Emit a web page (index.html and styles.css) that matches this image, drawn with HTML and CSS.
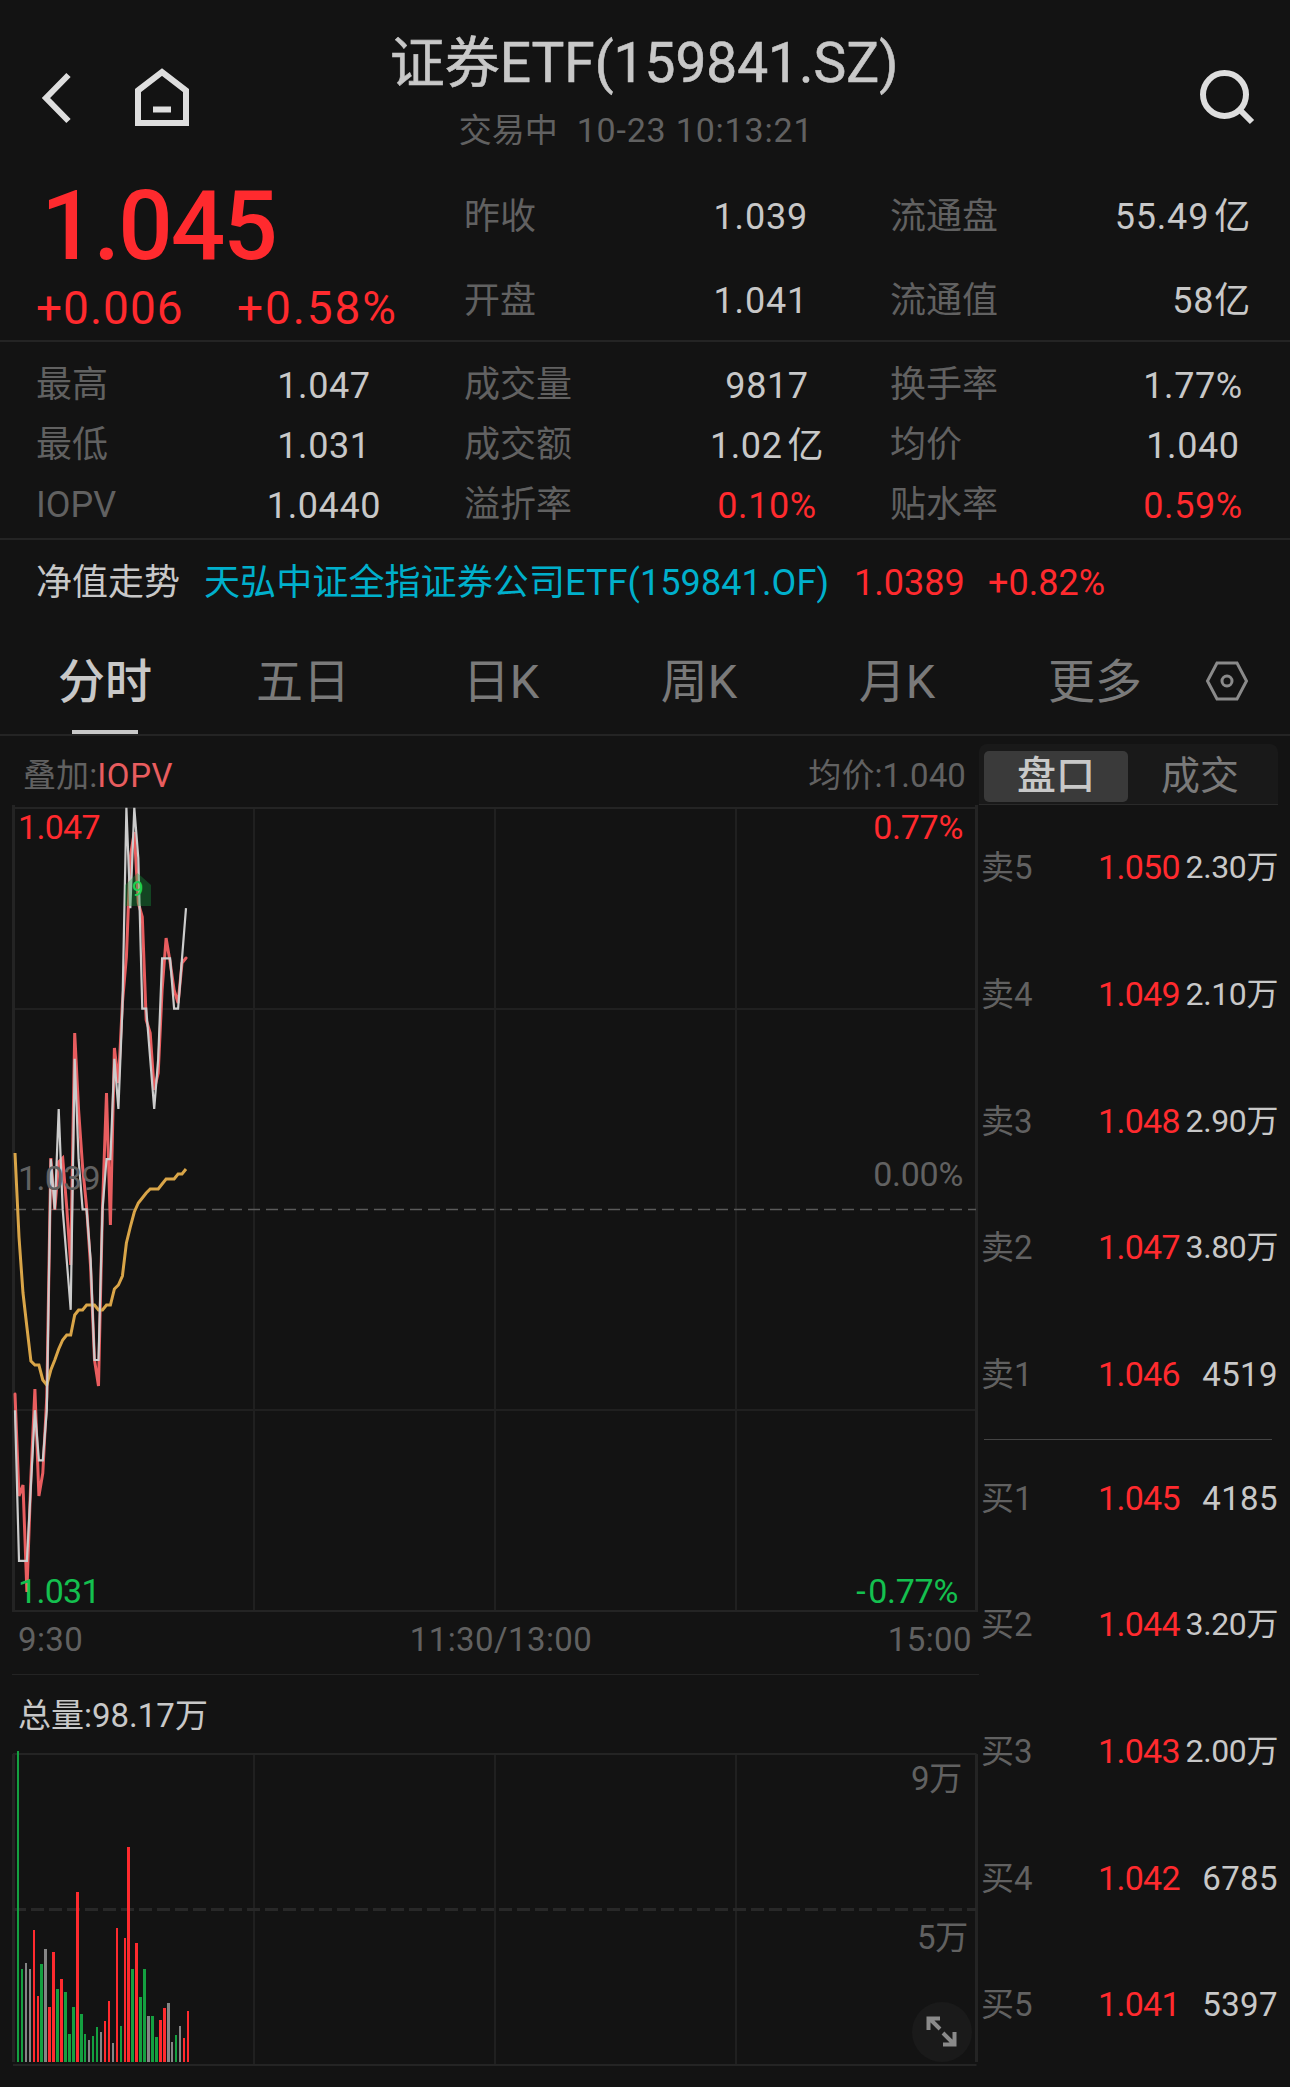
FILE: index.html
```html
<!DOCTYPE html>
<html lang="zh-CN">
<head>
  <meta charset="utf-8">
  <title>证券ETF(159841.SZ)</title>
  <link rel="stylesheet" href="styles.css">
</head>
<body>
  <!-- 顶部标题栏 -->
  <header class="header">
    <div class="header-left">
      <svg class="icon-back" width="32" height="52" viewBox="0 0 32 52"><path d="M29.500 3L7 26l22.500 23"/></svg>
      <svg class="icon-home" width="56" height="60" viewBox="0 0 56 60"><path d="M4 23.500L28 5l24 18.500V56H4z"/><path d="M19 42.500h18"/></svg>
    </div>
    <div class="header-title">
      <h1>证券ETF(159841.SZ)</h1>
      <p><span>交易中</span><span class="time">10-23 10:13:21</span></p>
    </div>
    <div class="header-right">
      <svg class="icon-search" width="58" height="58" viewBox="0 0 58 58"><circle cx="27.500" cy="27.500" r="21.500"/><path d="M43 43l12 12"/></svg>
    </div>
  </header>

  <!-- 最新价 -->
  <section class="quote">
    <div class="quote-price">
      <div class="price">1.045</div>
      <div class="change"><span>+0.006</span><span class="percent">+0.58%</span></div>
    </div>
    <dl class="quote-info">
      <dt>昨收</dt><dd>1.039</dd>
      <dt>流通盘</dt><dd>55.49<span class="unit">亿</span></dd>
      <dt>开盘</dt><dd>1.041</dd>
      <dt>流通值</dt><dd>58亿</dd>
    </dl>
  </section>

  <!-- 指标 -->
  <dl class="stats">
    <dt>最高</dt><dd>1.047</dd>
    <dt>成交量</dt><dd>9817</dd>
    <dt>换手率</dt><dd>1.77%</dd>
    <dt>最低</dt><dd>1.031</dd>
    <dt>成交额</dt><dd>1.02<span class="unit">亿</span></dd>
    <dt>均价</dt><dd>1.040</dd>
    <dt>IOPV</dt><dd>1.0440</dd>
    <dt>溢折率</dt><dd class="up">0.10%</dd>
    <dt>贴水率</dt><dd class="up">0.59%</dd>
  </dl>

  <!-- 净值走势 -->
  <div class="nav-trend">
    <span>净值走势</span>
    <a class="fund">天弘中证全指证券公司ETF(159841.OF)</a>
    <span class="up nav-value">1.0389</span>
    <span class="up">+0.82%</span>
  </div>

  <nav class="tabs">
    <a class="tab active">分时</a>
    <a class="tab">五日</a>
    <a class="tab">日K</a>
    <a class="tab">周K</a>
    <a class="tab">月K</a>
    <a class="tab">更多</a>
    <svg class="icon-setting" width="46" height="42" viewBox="0 0 46 42"><path d="M13 3h20l9.500 18L33 39H13L3.500 21z"/><circle cx="23" cy="21" r="5"/></svg>
  </nav>

  <main class="main">
    <div class="charts">
      <div class="legend">
        <span>叠加:<span class="iopv">IOPV</span></span>
        <span>均价:1.040</span>
      </div>

      <!-- 分时图 -->
      <svg class="chart" width="979" height="817" viewBox="0 799 979 817">
        <path class="grid" d="M14 1009H976M14 1410H976M254 808V1611M495 808V1611M736 808V1611"/>
        <path class="frame" d="M13 808H976.500M13 1611H976.500"/>
        <path class="side" d="M13.500 805V1612M976.500 805V1612"/>
        <path class="zero" d="M14 1209.500H976"/>
        <polyline id="iopv" class="line-iopv"/>
        <polyline id="avg" class="line-avg"/>
        <polyline id="price" class="line-price"/>
        <path class="flag" d="M125 906V885l12.500-12L151 885v21z"/>
        <text class="flag-text" x="132" y="896">9</text>
        <text class="grey start" x="18" y="1190">1.039</text>
        <text class="red start" x="18" y="839">1.047</text>
        <text class="green start" x="18" y="1603">1.031</text>
        <text class="red end" x="963" y="839">0.77%</text>
        <text class="grey end" x="963" y="1186">0.00%</text>
        <text class="green end" x="963" y="1603"><tspan dx="-5">-</tspan><tspan dx="3">0.77%</tspan></text>
      </svg>
      <div class="axis"><span>9:30</span><span>11:30/13:00</span><span>15:00</span></div>

      <!-- 成交量 -->
      <div class="total">总量:98.17万</div>
      <svg class="chart" width="979" height="325" viewBox="0 1745 979 325">
        <path class="grid" d="M254 1754V2064M495 1754V2064M736 1754V2064"/>
        <path class="frame" d="M13 1754H976.500M13 2065H976.500"/>
        <path class="side" d="M13.500 1754V2062M976.500 1754V2062"/>
        <path class="half" d="M13 1909.500H976"/>
        <g id="volume"></g>
        <text class="grey end unit-text" x="962" y="1790">9万</text>
        <text class="grey end unit-text" x="968" y="1949">5万</text>
        <circle class="expand-bg" cx="942" cy="2032" r="30"/>
        <path class="expand" d="M940 2029L929 2018M928.500 2030V2018.500H940M943 2033L954 2044M954.500 2032V2044.500H943"/>
      </svg>
    </div>

    <!-- 五档盘口 -->
    <aside class="book">
      <div class="switch"><span class="on">盘口</span><span>成交</span></div>
      <ul class="sell">
        <li><span>卖5</span><b>1.050</b><i class="wan">2.30万</i></li>
        <li><span>卖4</span><b>1.049</b><i class="wan">2.10万</i></li>
        <li><span>卖3</span><b>1.048</b><i class="wan">2.90万</i></li>
        <li><span>卖2</span><b>1.047</b><i class="wan">3.80万</i></li>
        <li><span>卖1</span><b>1.046</b><i>4519</i></li>
      </ul>
      <ul class="buy">
        <li><span>买1</span><b>1.045</b><i>4185</i></li>
        <li><span>买2</span><b>1.044</b><i class="wan">3.20万</i></li>
        <li><span>买3</span><b>1.043</b><i class="wan">2.00万</i></li>
        <li><span>买4</span><b>1.042</b><i>6785</i></li>
        <li><span>买5</span><b>1.041</b><i>5397</i></li>
      </ul>
    </aside>
  </main>

  <script src="chart.js"></script>
</body>
</html>
```

FILE: styles.css
```css
* {
  box-sizing: border-box;
}

body {
  margin: 0;
  width: 1290px;
  height: 2087px;
  overflow: hidden;
  background-color: #131313;
  color: #c8c8c8;
  font-family: Roboto, "Noto Sans CJK SC", sans-serif;
  font-size: 36px;
}

h1, p, dl, dd, ul {
  margin: 0;
  padding: 0;
}

svg {
  display: block;
  fill: none;
}

.up {
  color: #ff2a2e;
}

/* 标题栏 */
.header {
  display: grid;
  grid-template-columns: 240px 1fr 242px;
  height: 170px;
}

.header-left {
  display: flex;
  align-items: flex-start;
  padding: 67px 0 0 39px;
  gap: 63px;
}

.header-right {
  padding: 67px 0 0 149px;
}

.icon-back, .icon-home, .icon-search {
  stroke: #dedede;
  stroke-width: 6;
}

.icon-back {
  margin-top: 5px;
}

.header-title {
  padding-top: 33px;
  text-align: center;
}

.header-title h1 {
  font-size: 55px;
  font-weight: 400;
  line-height: 60px;
  -webkit-text-stroke: 0.6px #c8c8c8;
}

.header-title p {
  margin: 14px 16px 0 0;
  font-size: 33px;
  line-height: 46px;
  color: #616161;
}

.time {
  margin-left: 19px;
  font-size: 34px;
  letter-spacing: 0.8px;
}

/* 最新价 */
.quote {
  display: grid;
  grid-template-columns: 464px 1fr;
  height: 172px;
  border-bottom: 2px solid #242424;
}

.quote-price {
  color: #ff2a2e;
}

.price {
  padding-left: 41px;
  font-size: 96px;
  font-weight: 500;
  line-height: 112px;
  letter-spacing: -2px;
}

.change {
  display: flex;
  padding-left: 36px;
  font-size: 46px;
  line-height: 52px;
  letter-spacing: 1px;
}

.change span {
  width: 201px;
}

.change .percent {
  letter-spacing: 1.9px;
}

.quote-info {
  display: grid;
  grid-template-columns: 170px 174px 253px 190px;
  grid-auto-rows: 84px;
  padding-top: 5px;
  line-height: 84px;
}

.quote-info dt, .stats dt {
  color: #616161;
}

.quote-info dt:nth-of-type(even) {
  padding-left: 82px;
}

.quote-info dd {
  text-align: right;
  white-space: nowrap;
  letter-spacing: 0.8px;
}

.unit {
  margin-left: 5px;
}

/* 指标 */
.stats {
  display: grid;
  grid-template-columns: 175px 226px 217px 226px 216px 194px;
  height: 198px;
  padding: 13px 0 0 36px;
  grid-auto-rows: 60px;
  line-height: 60px;
  border-bottom: 2px solid #242424;
}

.stats dt:nth-of-type(3n + 2) {
  padding-left: 27px;
}

.stats dt:nth-of-type(3n) {
  padding-left: 10px;
}

.stats dd {
  padding-top: 1px;
  text-align: center;
  letter-spacing: 0.6px;
}

/* 净值走势 */
.nav-trend {
  display: flex;
  height: 85px;
  padding-left: 36px;
  line-height: 86px;
  white-space: nowrap;
}

.fund {
  width: 650px;
  margin-left: 24px;
  color: #00b0cc;
  letter-spacing: 0.1px;
}

.nav-value {
  width: 134px;
}

/* 周期切换 */
.tabs {
  display: flex;
  height: 111px;
  padding-left: 6px;
  border-bottom: 2px solid #242424;
  font-size: 47px;
  line-height: 114px;
  color: #7a7a7a;
}

.tab {
  position: relative;
  width: 198px;
  text-align: center;
}

.tab.active {
  color: #c8c8c8;
  font-weight: 500;
}

.tab.active::after {
  content: "";
  position: absolute;
  left: 66px;
  bottom: 0;
  width: 66px;
  height: 4px;
  background-color: #c8c8c8;
}

.icon-setting {
  margin: 35px 0 0 10px;
  stroke: #8a8a8a;
  stroke-width: 3;
}

/* 图表 */
.main {
  display: grid;
  grid-template-columns: 979px 311px;
}

.legend {
  display: flex;
  justify-content: space-between;
  height: 63px;
  padding: 0 13px 0 23px;
  font-size: 33px;
  line-height: 80px;
  letter-spacing: 0.1px;
  color: #616161;
}

.iopv {
  color: #e85d5f;
  letter-spacing: 0.6px;
}

.chart text {
  font-size: 34px;
}

.chart .start {
  letter-spacing: -0.7px;
}

.chart .end {
  text-anchor: end;
  letter-spacing: -0.3px;
}

.chart .unit-text {
  font-size: 33px;
}

.grey {
  fill: #616161;
}

.red {
  fill: #ff2a2e;
}

.green {
  fill: #14c04f;
}

.grid {
  stroke: #202020;
  stroke-width: 2;
}

.frame {
  stroke: #242424;
  stroke-width: 2;
}

.side {
  stroke: #242424;
  stroke-width: 3;
}

.zero {
  stroke: #5a5a5a;
  stroke-width: 1.5;
  stroke-dasharray: 12 6;
}

.half {
  stroke: #282828;
  stroke-width: 3;
  stroke-dasharray: 13 5;
}

.line-iopv {
  stroke: #e85d5f;
  stroke-width: 3;
  stroke-linecap: round;
}

.line-avg {
  stroke: #d9a548;
  stroke-width: 3;
}

.line-price {
  stroke: #cccccc;
  stroke-width: 2.2;
}

.flag {
  fill: #14a040;
  opacity: 0.35;
}

.chart .flag-text {
  fill: #20d050;
  font-size: 20px;
  font-weight: 500;
}

.axis {
  display: grid;
  grid-template-columns: 1fr auto 1fr;
  height: 58px;
  padding: 0 7px 0 18px;
  font-size: 33px;
  line-height: 47px;
  color: #616161;
  letter-spacing: 0.4px;
}

.axis span:nth-child(2) {
  padding-left: 12px;
}

.axis span:last-child {
  text-align: right;
}

.total {
  height: 71px;
  margin-left: 12px;
  padding-left: 6px;
  border-top: 1px solid #242424;
  font-size: 33px;
  line-height: 82px;
}

.expand-bg {
  fill: #1a1a1a;
}

.expand {
  stroke: #8a8a8a;
  stroke-width: 4;
}

/* 盘口 */
.switch {
  display: flex;
  width: 299px;
  height: 61px;
  margin-top: 8px;
  padding: 7px 5px;
  background-color: #191919;
  border-bottom: 1px solid #2a2a2a;
  border-radius: 8px 8px 0 0;
  font-size: 39px;
  line-height: 50px;
  text-align: center;
  color: #7a7a7a;
}

.switch span {
  width: 144px;
  height: 51px;
}

.switch .on {
  background-color: #3a3a3a;
  border-radius: 5px;
  color: #c8c8c8;
  font-weight: 500;
}

.sell, .buy {
  list-style: none;
  font-size: 33px;
}

.sell {
  height: 633px;
}

.buy {
  position: relative;
}

.buy::before {
  content: "";
  position: absolute;
  left: 5px;
  top: 1px;
  width: 288px;
  height: 1px;
  background-color: #444444;
}

.book li {
  display: grid;
  grid-template-columns: 113px 88px 1fr;
  height: 126.800px;
  padding: 0 12px 0 2px;
  line-height: 125px;
}

.book .buy li:first-child {
  height: 124px;
  line-height: 121px;
}

.book li span {
  color: #616161;
}

.book li b {
  padding-left: 4px;
  font-size: 34px;
  font-weight: 400;
  letter-spacing: -0.7px;
  color: #ff2a2e;
}

.book li i {
  justify-self: end;
  font-size: 33px;
  font-style: normal;
  letter-spacing: 0.4px;
  white-space: nowrap;
}

.book li .wan {
  font-size: 32px;
  letter-spacing: -0.4px;
}
```

FILE: chart.js
```js
// 每分钟一个点,9:30 起
var prices = [1035, 1032, 1032, 1032, 1033.5, 1035, 1034, 1034, 1035, 1040, 1039, 1041, 1039, 1038, 1037,
  1042, 1040, 1039, 1039, 1038, 1036, 1036, 1039, 1040, 1040, 1042, 1041, 1043, 1047, 1045, 1047, 1046,
  1043, 1043, 1042, 1041, 1042, 1044, 1044, 1044, 1043, 1043, 1044, 1045];

// 曲线坐标 y
var iopv = [1394, 1496, 1485, 1592, 1477, 1389, 1496, 1473, 1397, 1158, 1210, 1162, 1158, 1207, 1265,
  1033, 1110, 1167, 1207, 1267, 1360, 1386, 1207, 1093, 1225, 1048, 1083, 1003, 957, 857, 832, 903,
  917, 1020, 1033, 1090, 1073, 990, 938, 962, 990, 1003, 963, 958];
var avg = [1153, 1237, 1293, 1327, 1361, 1365, 1365, 1380, 1385, 1370, 1360, 1349, 1340, 1335, 1335,
  1315, 1310, 1310, 1305, 1305, 1305, 1310, 1310, 1305, 1305, 1289, 1285, 1276, 1243, 1227, 1212, 1203,
  1198, 1193, 1189, 1189, 1189, 1184, 1179, 1179, 1179, 1174, 1174, 1169];

// 成交量: [x, 宽, 高, 颜色]
var volume = [
  [17, 2, 311, 'g'], [21, 2, 93, 'g'], [25, 2, 99, 'n'], [29, 2, 93, 'n'], [33, 2, 132, 'r'], [37, 2, 66, 'r'],
  [40, 3, 98, 'g'], [44, 3, 113, 'n'], [48, 3, 55, 'r'], [52, 3, 110, 'r'], [56, 3, 73, 'g'], [60, 3, 83, 'r'],
  [64, 3, 70, 'g'], [68, 3, 28, 'g'], [72, 3, 55, 'g'], [76, 3, 170, 'r'], [80, 3, 48, 'g'], [84, 2, 28, 'g'],
  [88, 2, 22, 'n'], [92, 2, 26, 'g'], [96, 2, 35, 'g'], [100, 2, 30, 'n'], [104, 2, 41, 'r'], [108, 2, 61, 'r'],
  [112, 2, 19, 'n'], [116, 2, 134, 'r'], [120, 2, 36, 'g'], [124, 2, 124, 'r'], [127, 3, 215, 'r'], [131, 3, 93, 'g'],
  [135, 3, 119, 'r'], [139, 3, 65, 'g'], [143, 3, 93, 'g'], [147, 3, 46, 'n'], [151, 3, 46, 'g'], [155, 3, 25, 'g'],
  [159, 3, 42, 'r'], [163, 3, 54, 'r'], [167, 3, 59, 'n'], [171, 2, 20, 'n'], [175, 2, 27, 'g'], [179, 2, 36, 'n'],
  [183, 2, 24, 'r'], [187, 2, 51, 'r']
];
var colors = { r: '#ff2a2e', g: '#14a040', n: '#858585' };

function drawLine(id, ys) {
  var points = ys.map(function (y, i) {
    return (15 + i * 3.977).toFixed(1) + ',' + y;
  });
  document.getElementById(id).setAttribute('points', points.join(' '));
}

drawLine('iopv', iopv);
drawLine('avg', avg);
drawLine('price', prices.map(function (p) {
  return 1611 - (p - 1031) * 50.2;
}));

var group = document.getElementById('volume');
volume.forEach(function (v) {
  var rect = document.createElementNS('http://www.w3.org/2000/svg', 'rect');
  rect.setAttribute('x', v[0]);
  rect.setAttribute('y', 2062 - v[2]);
  rect.setAttribute('width', v[1]);
  rect.setAttribute('height', v[2]);
  rect.setAttribute('fill', colors[v[3]]);
  group.appendChild(rect);
});
```
